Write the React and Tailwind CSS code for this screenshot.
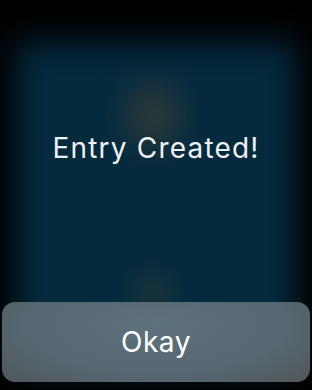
export default function App() {
  return (
    <div className="relative w-[312px] h-[390px] bg-black overflow-hidden" style={{ fontFamily: 'Inter, "Open Sans", sans-serif' }}>
      <div className="absolute left-[16px] right-[16px] top-[42px] bottom-[20px] bg-[#042a3e] blur-[16px]" />
      <div className="absolute left-[126px] top-[84px] w-[54px] h-[64px] rounded-full bg-[#4a4436] opacity-60 blur-[16px]" />
      <div className="absolute left-[130px] top-[272px] w-[46px] h-[40px] rounded-full bg-[#2f3a36] opacity-50 blur-[12px]" />
      <div className="relative flex flex-col h-full">
        <div className="flex-1 flex items-start justify-center pt-[128px]">
          <span className="text-[28px] text-[#eef1f3] tracking-[1.2px] leading-[40px]">Entry Created!</span>
        </div>
        <div className="mx-[2px] mb-[8px] h-[80px] rounded-[13px] bg-[radial-gradient(ellipse_at_50%_30%,#5d717c_0%,#566871_60%,#505558_100%)] flex items-center justify-center">
          <span className="text-[28px] text-white tracking-[0.6px]">Okay</span>
        </div>
      </div>
    </div>
  );
}
